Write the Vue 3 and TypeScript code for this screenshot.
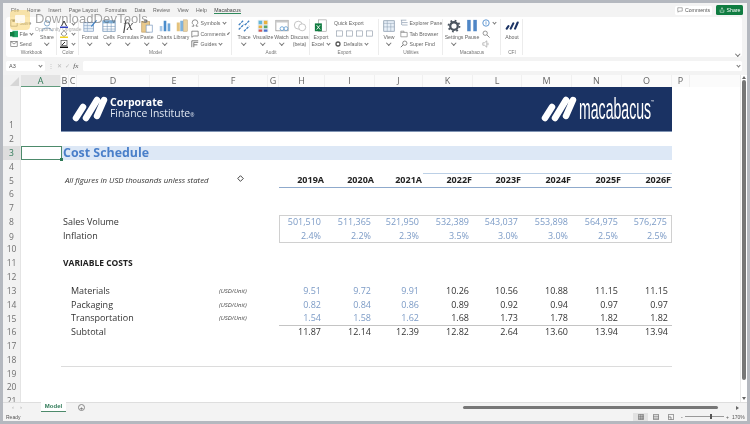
<script setup lang="ts">
const tabs: string[] = ['File', 'Home', 'Insert', 'Page Layout', 'Formulas', 'Data', 'Review', 'View', 'Help']
const cols: string[] = ['A', 'B', 'C', 'D', 'E', 'F', 'G', 'H', 'I', 'J', 'K', 'L', 'M', 'N', 'O', 'P']
const rowNums: number[] = Array.from({ length: 21 }, (_, i) => i + 1)
const years: string[] = ['2019A', '2020A', '2021A', '2022F', '2023F', '2024F', '2025F', '2026F']

interface Line { blue: number; values: string[] }
const lines: Record<number, Line & { label?: string; unit?: string; indent?: boolean }> = {
  8: { label: 'Sales Volume', blue: 8, values: ['501,510', '511,365', '521,950', '532,389', '543,037', '553,898', '564,975', '576,275'] },
  9: { label: 'Inflation', blue: 8, values: ['2.4%', '2.2%', '2.3%', '3.5%', '3.0%', '3.0%', '2.5%', '2.5%'] },
  13: { label: 'Materials', unit: '(USD/Unit)', indent: true, blue: 3, values: ['9.51', '9.72', '9.91', '10.26', '10.56', '10.88', '11.15', '11.15'] },
  14: { label: 'Packaging', unit: '(USD/Unit)', indent: true, blue: 3, values: ['0.82', '0.84', '0.86', '0.89', '0.92', '0.94', '0.97', '0.97'] },
  15: { label: 'Transportation', unit: '(USD/Unit)', indent: true, blue: 3, values: ['1.54', '1.58', '1.62', '1.68', '1.73', '1.78', '1.82', '1.82'] },
  16: { label: 'Subtotal', indent: true, blue: 0, values: ['11.87', '12.14', '12.39', '12.82', '2.64', '13.60', '13.94', '13.94'] },
}
</script>

<template>
  <div class="window">
    <header class="tabs">
      <nav class="tab-list">
        <span v-for="t in tabs" :key="t" class="tab">{{ t }}</span>
        <span class="tab tab-active">Macabacus</span>
      </nav>
      <div class="tab-actions">
        <span class="btn-comments">
          <svg viewBox="0 0 8 8" class="i6"><path d="M1 1h6v4.500H3L1.500 7V5.500H1z" fill="none" stroke="#666" stroke-width=".7" /></svg>
          Comments
        </span>
        <span class="btn-share">
          <svg viewBox="0 0 8 8" class="i6"><path d="M1.500 3.500v3.500h5V3.500M4 5V1M2.600 2.300 4 1l1.400 1.300" fill="none" stroke="#fff" stroke-width=".7" /></svg>
          Share
        </span>
      </div>
    </header>

    <section class="ribbon">
      <div class="group g-workbook">
        <div class="group-body">
          <div class="small-col c-workbook">
            <div class="small"><svg viewBox="0 0 10 10" class="i8"><path d="M1 1h6l2 2v6H1z" fill="#fff" stroke="#555" stroke-width=".8" /><rect x="3" y="1" width="3" height="2.500" fill="#555" /></svg>Save</div>
            <div class="small"><svg viewBox="0 0 10 10" class="i8"><rect x="3" y="1" width="7" height="8" fill="#21a366" /><rect x="0" y="2.500" width="5.500" height="5.500" fill="#107c41" /></svg>File <i class="chev-inline"></i></div>
            <div class="small"><svg viewBox="0 0 10 10" class="i8"><rect x="1" y="2" width="8" height="6" fill="none" stroke="#666" stroke-width=".8" /><path d="M1 2l4 3 4-3" fill="none" stroke="#666" stroke-width=".8" /></svg>Send</div>
          </div>
          <div class="big w-share">
            <svg viewBox="0 0 16 16" class="i16"><circle cx="8" cy="5" r="3" fill="none" stroke="#7aa3c9" /><path d="M2 14c1-5 11-5 12 0" fill="none" stroke="#7aa3c9" /></svg>
            <span>Share</span><i class="chev"></i>
          </div>
        </div>
        <div class="group-name">Workbook</div>
      </div>

      <div class="group g-color">
        <div class="group-body color-body">
          <div class="color-row"><svg viewBox="0 0 8 8" class="i8"><path d="M1.500 6 4 1l2.500 5" fill="none" stroke="#333" /><rect y="6.500" width="8" height="1.500" fill="#2e3fc4" /></svg><i class="chev-inline"></i></div>
          <div class="color-row"><svg viewBox="0 0 8 8" class="i8"><path d="M4 .5 7 4 4 6.500 1 4z" fill="#fff" stroke="#666" stroke-width=".7" /><rect y="6.500" width="8" height="1.500" fill="#f2d21f" /></svg><i class="chev-inline"></i></div>
          <div class="color-row"><svg viewBox="0 0 8 8" class="i8"><rect x="1" y=".5" width="6" height="5" fill="#fff" stroke="#555" stroke-width=".7" /><path d="m2 5 3-3" stroke="#333" /><rect y="6.500" width="8" height="1.500" fill="#111" /></svg><i class="chev-inline"></i></div>
        </div>
        <div class="group-name">Color</div>
      </div>

      <div class="group g-model">
        <div class="group-body pad-1">
          <div class="big w-20">
            <svg viewBox="0 0 16 16" class="i16"><rect x="1" y="4" width="11" height="10" fill="#e8f0f8" stroke="#7d9bc0" stroke-width=".8" /><path d="M1 7.500h11M1 11h11M5 4v10" stroke="#7d9bc0" stroke-width=".6" /><path d="m9 8 6-7 1 1-6 7z" fill="#3f83c8" /></svg>
            <span>Format</span><i class="chev"></i>
          </div>
          <div class="big w-18">
            <svg viewBox="0 0 16 16" class="i16"><rect x="1" y="2" width="14" height="12" fill="#fff" stroke="#6b8fb5" stroke-width=".9" /><rect x="1" y="2" width="14" height="3" fill="#7fb2dc" /><path d="M1 8.500h14M1 11.500h14M6 2v12M10.500 2v12" stroke="#6b8fb5" stroke-width=".6" /></svg>
            <span>Cells</span><i class="chev"></i>
          </div>
          <div class="big w-20">
            <span class="fx">fx</span>
            <span>Formulas</span><i class="chev"></i>
          </div>
          <div class="big w-18">
            <svg viewBox="0 0 16 16" class="i16"><rect x="2" y="3" width="9" height="12" fill="#e9c98b" stroke="#b69257" stroke-width=".7" /><rect x="4.500" y="1" width="4" height="3" fill="#999" /><rect x="7" y="7" width="7" height="8" fill="#fff" stroke="#7d9bc0" stroke-width=".8" /></svg>
            <span>Paste</span><i class="chev"></i>
          </div>
          <div class="big w-17">
            <svg viewBox="0 0 16 16" class="i16"><rect x="2" y="8" width="3" height="6" fill="#a8c8e8" /><rect x="6.500" y="2" width="3" height="12" fill="#4a8ccb" /><rect x="11" y="5" width="3" height="9" fill="#6ea6d8" /></svg>
            <span>Charts</span><i class="chev"></i>
          </div>
          <div class="big w-17">
            <svg viewBox="0 0 16 16" class="i16"><rect x="2" y="4" width="3.500" height="10" fill="#e4c27c" /><rect x="6" y="2" width="3.500" height="12" fill="#7fb2dc" /><rect x="10" y="1" width="4" height="13" fill="#e9d2a0" stroke="#b69257" stroke-width=".5" /></svg>
            <span>Library</span>
          </div>
          <div class="small-col c-symbols">
            <div class="small"><svg viewBox="0 0 10 10" class="i8"><path d="M1 9h2.500V7.500C2 6.500 1.500 5.500 1.500 4.500a3.500 3.500 0 0 1 7 0c0 1-.5 2-2 3V9H9" fill="none" stroke="#555" stroke-width=".8" /></svg>Symbols <i class="chev-inline"></i></div>
            <div class="small"><svg viewBox="0 0 10 10" class="i8"><path d="M1 1.500h8v6H3.500L1 9z" fill="none" stroke="#555" stroke-width=".8" /></svg>Comments <i class="chev-inline"></i></div>
            <div class="small"><svg viewBox="0 0 10 10" class="i8"><path d="M1 1h8M1 1v8M3.500 3v6M3.500 3H9M3.500 6H8" fill="none" stroke="#555" stroke-width=".9" /></svg>Guides <i class="chev-inline"></i></div>
          </div>
        </div>
        <div class="group-name">Model</div>
      </div>

      <div class="group g-audit">
        <div class="group-body pad-2">
          <div class="big w-20">
            <svg viewBox="0 0 16 16" class="i16"><path d="m2 7 5-5M2 12l6-6M8 14l6-6M9 7l5-5" stroke="#3f7fbf" stroke-width="1.500" stroke-dasharray="3 1" /></svg>
            <span>Trace</span><i class="chev"></i>
          </div>
          <div class="big w-18">
            <svg viewBox="0 0 16 16" class="i16"><rect x="2" y="1" width="12" height="14" fill="#dfeaf3" /><rect x="3" y="2" width="4" height="4" fill="#63b7d6" /><rect x="9" y="2" width="4" height="4" fill="#e9b23f" /><rect x="3" y="7.500" width="4" height="3" fill="#e9b23f" /><rect x="9" y="7.500" width="4" height="3" fill="#5aa469" /><rect x="3" y="12" width="4" height="2.500" fill="#d9564f" /><rect x="9" y="12" width="4" height="2.500" fill="#4a6ecb" /></svg>
            <span>Visualize</span><i class="chev"></i>
          </div>
          <div class="big w-19">
            <svg viewBox="0 0 16 16" class="i16"><rect x="1" y="1.500" width="14" height="12" fill="#fff" stroke="#888" stroke-width=".8" /><rect x="1" y="1.500" width="14" height="2.500" fill="#c9c9c9" /><circle cx="8" cy="11" r="2.200" fill="none" stroke="#6aa2d3" /><circle cx="12.500" cy="11" r="2.200" fill="none" stroke="#6aa2d3" /></svg>
            <span>Watch</span><i class="chev"></i>
          </div>
          <div class="big w-17">
            <svg viewBox="0 0 16 16" class="i16"><circle cx="6" cy="7" r="4.500" fill="#fff" stroke="#bbb" /><circle cx="10.500" cy="9.500" r="4" fill="#fff" stroke="#bbb" /></svg>
            <span>Discuss</span><span class="beta">(beta)</span>
          </div>
        </div>
        <div class="group-name">Audit</div>
      </div>

      <div class="group g-export">
        <div class="group-body">
          <div class="big w-22">
            <svg viewBox="0 0 16 16" class="i16"><rect x="5" y="1" width="9" height="13" fill="#fff" stroke="#999" stroke-width=".7" /><rect x="1" y="5" width="8" height="9" fill="#107c41" /><path d="m3 7 4 5M7 7l-4 5" stroke="#fff" /></svg>
            <span>Export</span><span class="beta">Excel <i class="chev-inline"></i></span>
          </div>
          <div class="small-col c-quick">
            <div class="small">Quick Export</div>
            <div class="small q-icons">
              <svg v-for="n in 4" :key="n" viewBox="0 0 8 8" class="i7"><rect x=".5" y="1" width="7" height="6" fill="none" stroke="#8a96a5" stroke-width=".7" /></svg>
            </div>
            <div class="small"><svg viewBox="0 0 10 10" class="i8"><circle cx="5" cy="5" r="2.500" fill="none" stroke="#555" stroke-width="1.600" /></svg>Defaults <i class="chev-inline"></i></div>
          </div>
        </div>
        <div class="group-name">Export</div>
      </div>

      <div class="group g-utilities">
        <div class="group-body">
          <div class="big w-20">
            <svg viewBox="0 0 16 16" class="i16"><rect x="2" y="2" width="12" height="12" fill="#e8f0f8" stroke="#7d90a5" stroke-width=".8" /><path d="M2 5h12M6 2v12M10 5v9M2 9h12" stroke="#7d90a5" stroke-width=".5" /></svg>
            <span>View</span><i class="chev"></i>
          </div>
          <div class="small-col c-utils">
            <div class="small"><svg viewBox="0 0 10 10" class="i8"><path d="M1 1.500h7M2.500 4.500h7M2.500 7.500h7M2 1.500v6" fill="none" stroke="#7d90a5" stroke-width=".8" /></svg>Explorer Pane</div>
            <div class="small"><svg viewBox="0 0 10 10" class="i8"><path d="M1 3h8v5.500H1zM1 3V1.500h4V3" fill="none" stroke="#777" stroke-width=".8" /></svg>Tab Browser</div>
            <div class="small"><svg viewBox="0 0 10 10" class="i8"><circle cx="6" cy="4" r="2.700" fill="none" stroke="#555" stroke-width=".8" /><path d="m4 6-3 3" stroke="#555" /></svg>Super Find</div>
          </div>
        </div>
        <div class="group-name">Utilities</div>
      </div>

      <div class="group g-macabacus">
        <div class="group-body">
          <div class="big w-22">
            <svg viewBox="0 0 16 16" class="i16"><circle cx="8" cy="8" r="4.300" fill="none" stroke="#4b5560" stroke-width="2.600" /><circle cx="8" cy="8" r="6.300" fill="none" stroke="#4b5560" stroke-width="2" stroke-dasharray="2 2.950" /></svg>
            <span>Settings</span><i class="chev"></i>
          </div>
          <div class="big w-14">
            <svg viewBox="0 0 16 16" class="i16"><rect x="2.500" y="1" width="4" height="13" fill="#4f86c6" /><rect x="9.500" y="1" width="4" height="13" fill="#4f86c6" /></svg>
            <span>Pause</span>
          </div>
          <div class="small-col c-mac">
            <div class="small"><svg viewBox="0 0 10 10" class="i8"><circle cx="5" cy="5" r="4" fill="none" stroke="#5a93d0" stroke-width="1.200" /><path d="M5 3v4" stroke="#5a93d0" /></svg><i class="chev-inline"></i></div>
            <div class="small"><svg viewBox="0 0 10 10" class="i8"><circle cx="4" cy="4" r="2.700" fill="none" stroke="#888" stroke-width="1.100" /><path d="m6 6 3.500 3.500" stroke="#888" stroke-width="1.200" /></svg></div>
            <div class="small"><svg viewBox="0 0 10 10" class="i8"><path d="M1 3.500h2L6 1v8L3 6.500H1z" fill="none" stroke="#999" stroke-width=".8" /><path d="M7.500 3.500v3" stroke="#999" stroke-width=".8" /></svg></div>
          </div>
        </div>
        <div class="group-name">Macabacus</div>
      </div>

      <div class="group g-cfi">
        <div class="group-body">
          <div class="big w-22">
            <svg viewBox="0 0 16 16" class="i16"><path d="m2 11 2-3M6.500 11l3-6M11.500 11l3-7" stroke="#1a3263" stroke-width="2.400" stroke-linecap="round" /></svg>
            <span>About</span>
          </div>
        </div>
        <div class="group-name">CFI</div>
      </div>
      <i class="chev ribbon-chev"></i>
    </section>

    <section class="formula">
      <div class="namebox"><span>A3</span><i class="chev-inline"></i></div>
      <div class="formula-btns">
        <span class="dim">⋮</span><span class="dim">✕</span><span class="dim">✓</span><span class="fx-small">fx</span>
      </div>
      <div class="formula-input"><i class="chev-inline"></i></div>
    </section>

    <section class="sheet">
      <div class="grid-area">
        <div class="row head-row">
          <div class="corner"><svg viewBox="0 0 18 12" class="corner-svg"><path d="M16 2v9H7z" fill="#d6d6d6" /></svg></div>
          <div v-for="c in cols" :key="c" class="col-head" :class="{ 'col-sel': c === 'A' }">{{ c }}</div>
          <div class="col-rest"></div>
        </div>
        <div class="rows">
          <div v-for="n in rowNums" :key="n" class="row" :class="{ 'row-tall': n === 1 }">
            <div class="row-head" :class="{ 'row-sel': n === 3 }">{{ n }}</div>

            <template v-if="n === 1">
              <div class="banner">
                <div class="brand">
                  <svg viewBox="0 0 36 26" class="brand-mark"><path d="M4 22 11 11M14 22 25 4M25 20 32 4" stroke="#fff" stroke-width="6.500" stroke-linecap="round" /></svg>
                  <div class="brand-text"><b>Corporate</b><span>Finance Institute<small>®</small></span></div>
                </div>
                <div class="brand">
                  <svg viewBox="0 0 36 26" class="brand-mark"><path d="M4 22 11 11M14 22 25 4M25 20 32 4" stroke="#fff" stroke-width="6.500" stroke-linecap="round" /></svg>
                  <span class="mac-word">macabacus</span><span class="tm">™</span>
                </div>
              </div>
            </template>

            <template v-else-if="n === 3">
              <div class="selected"><i class="handle"></i></div>
              <div class="band">Cost Schedule</div>
            </template>

            <template v-else-if="n === 5">
              <div class="note">All figures in USD thousands unless stated<svg viewBox="0 0 10 10" class="cursor"><path d="M5 1 9 5 5 9 1 5z" fill="#fff" stroke="#333" stroke-width="1.300" /></svg></div>
              <div v-for="(y, i) in years" :key="y" class="year" :class="{ 'year-top': i > 2 }">{{ y }}</div>
            </template>

            <template v-else-if="n === 11">
              <div class="section">VARIABLE COSTS</div>
            </template>

            <template v-else-if="n === 18">
              <div class="rule"></div>
            </template>

            <template v-else-if="lines[n]">
              <div class="label" :class="{ indent: lines[n].indent }">{{ lines[n].label }}</div>
              <div v-if="lines[n].unit" class="unit">{{ lines[n].unit }}</div>
              <div
                v-for="(v, i) in lines[n].values"
                :key="i"
                class="num"
                :class="{
                  blue: i < lines[n].blue,
                  'box-top': n === 8,
                  'box-bottom': n === 9,
                  'box-left': (n === 8 || n === 9) && i === 0,
                  'box-right': (n === 8 || n === 9) && i === 7,
                  'sub-top': n === 16,
                }"
              >{{ v }}</div>
            </template>
          </div>
        </div>
      </div>
      <aside class="vscroll">
        <i class="arrow-up"></i>
        <div class="vthumb"></div>
        <i class="arrow-down"></i>
      </aside>
    </section>

    <section class="tabbar">
      <div class="nav-arrows"><span>‹</span><span>›</span></div>
      <div class="sheet-tab">Model</div>
      <div class="add-sheet">+</div>
      <div class="hscroll"><div class="hthumb"></div><i class="arrow-right"></i></div>
    </section>

    <footer class="status">
      <span>Ready</span>
      <div class="status-right">
        <span class="view view-on"><svg viewBox="0 0 8 8" class="i6b"><path d="M.5.5h7v7h-7zM.5 3h7M.5 5.500h7M3 .5v7M5.500.5v7" fill="none" stroke="#555" stroke-width=".7" /></svg></span>
        <span class="view"><svg viewBox="0 0 8 8" class="i6b"><path d="M.5.5h7v7h-7zM.5 3h7M.5 5.500h7" fill="none" stroke="#555" stroke-width=".8" /></svg></span>
        <span class="view"><svg viewBox="0 0 8 8" class="i6b"><path d="M.5.5h7v7h-7zM.5 4h3.500v3.500" fill="none" stroke="#555" stroke-width=".8" /></svg></span>
        <div class="zoom"><span>-</span><div class="slider"><i></i></div><span>+</span></div>
        <span class="pct">170%</span>
      </div>
    </footer>

    <div class="watermark">
      <div class="wm-logo"><i></i></div>
      <div class="wm-text">
        <div class="wm-title">DownloadDevTools</div>
        <div class="wm-sub">Opportunity Upgrade</div>
      </div>
    </div>
  </div>
</template>

<style scoped>
.window {
  position: relative;
  width: 750px;
  height: 424px;
  box-sizing: border-box;
  border: 3px solid #b4b8bf;
  background: #f3f3f3;
  font-family: "Open Sans", sans-serif;
  color: #333;
  overflow: hidden;
  display: flex;
  flex-direction: column;
  filter: blur(0.35px);
}
.tabs {
  height: 14px;
  display: flex;
  align-items: center;
  justify-content: space-between;
  flex: none;
}
.tab-list {
  display: flex;
  gap: 7.500px;
  padding-left: 8px;
  font-family: "Liberation Sans", sans-serif;
  font-size: 5.200px;
  color: #666;
}
.tab-active {
  border-bottom: 1px solid #2f8a5c;
  color: #444;
}
.tab-actions {
  display: flex;
  gap: 4px;
  padding-right: 4px;
  align-items: center;
  font-family: "Liberation Sans", sans-serif;
  font-size: 5.200px;
}
.btn-comments, .btn-share {
  display: flex;
  align-items: center;
  justify-content: center;
  gap: 2px;
  height: 9px;
  border-radius: 1.500px;
  box-sizing: border-box;
}
.btn-comments { background: #fff; color: #555; width: 37px; }
.btn-share { background: #107c41; color: #fff; height: 10px; width: 27px; }
.i6 { width: 6px; height: 6px; }
.i7 { width: 7px; height: 7px; }
.i8 { width: 8px; height: 8px; flex: none; }
.i16 { width: 14px; height: 14px; flex: none; }
.i6b { width: 6px; height: 6px; }

.ribbon {
  position: relative;
  height: 40px;
  margin: 0 5px 0 3px;
  background: #fff;
  border-radius: 3px;
  display: flex;
  flex: none;
  font-family: "Liberation Sans", sans-serif;
  font-size: 5.200px;
  color: #666;
}
.group {
  display: flex;
  flex-direction: column;
  flex: none;
  position: relative;
}
.group::after {
  content: "";
  position: absolute;
  right: 0;
  top: 2px;
  bottom: 2px;
  width: 1px;
  background: #ececec;
}
.g-workbook { width: 51px; }
.g-color { width: 22px; }
.g-model { width: 153px; }
.g-audit { width: 78px; }
.g-export { width: 69px; }
.g-utilities { width: 64px; }
.g-macabacus { width: 58px; }
.g-cfi { width: 22px; }
.group-body {
  height: 33px;
  display: flex;
  padding-top: 2px;
  box-sizing: border-box;
}
.group-name {
  text-align: center;
  line-height: 6px;
  color: #777;
  font-size: 4.800px;
}
.pad-1 { padding-left: 1px; }
.pad-2 { padding-left: 2px; }
.big {
  display: flex;
  flex-direction: column;
  align-items: center;
  flex: none;
  line-height: 6px;
  white-space: nowrap;
}
.big > span:not(.fx) { margin-top: 1px; }
.big > .beta { margin-top: 0; }
.chev {
  display: block;
  width: 2.500px;
  height: 2.500px;
  margin-top: 1px;
  border-right: .7px solid #777;
  border-bottom: .7px solid #777;
  transform: rotate(45deg);
}
.chev-inline {
  display: inline-block;
  width: 2px;
  height: 2px;
  margin: 0 1px 1px 1px;
  border-right: .6px solid #777;
  border-bottom: .6px solid #777;
  transform: rotate(45deg);
}
.w-14 { width: 14px; }
.w-17 { width: 17px; }
.w-18 { width: 18px; }
.w-19 { width: 19px; }
.w-20 { width: 20px; }
.w-22 { width: 22px; }
.w-share { width: 20px; margin-left: 1px; }
.fx {
  font-family: "Liberation Serif", serif;
  font-style: italic;
  font-size: 14px;
  line-height: 14px;
  height: 14px;
  color: #444;
}
.small-col {
  display: flex;
  flex-direction: column;
  justify-content: space-between;
  height: 29px;
  flex: none;
}
.small {
  display: flex;
  align-items: center;
  gap: 1.500px;
  height: 8px;
  white-space: nowrap;
}
.c-workbook { width: 30px; padding-left: 4px; box-sizing: border-box; }
.c-symbols { margin-left: 1px; width: 36px; }
.c-quick { margin-left: 2px; width: 42px; }
.c-utils { margin-left: 1px; }
.c-mac { margin-left: 3px; }
.q-icons { gap: 3px; padding-left: 2px; }
.color-body {
  flex-direction: column;
  justify-content: space-between;
  align-items: flex-start;
  padding: 3px 0 2px 3px;
}
.color-row { display: flex; align-items: center; gap: 3px; height: 8px; }
.ribbon-chev { position: absolute; right: 3px; bottom: 2px; margin: 0; }

.formula {
  height: 10px;
  margin: 4px 5px 4px 3px;
  flex: none;
  display: flex;
  font-family: "Liberation Sans", sans-serif;
  font-size: 5.500px;
  color: #555;
  line-height: 10px;
}
.namebox {
  width: 39px;
  background: #fff;
  border-radius: 1.500px;
  display: flex;
  justify-content: space-between;
  align-items: center;
  padding: 0 2px 0 3px;
  box-sizing: border-box;
}
.formula-btns {
  width: 38px;
  display: flex;
  justify-content: space-around;
  padding: 0 3px 0 1px;
  box-sizing: border-box;
}
.dim { color: #bbb; }
.fx-small { font-family: "Liberation Serif", serif; font-style: italic; font-size: 7px; color: #555; }
.formula-input {
  flex: 1;
  background: #fff;
  border-radius: 1.500px;
  display: flex;
  justify-content: flex-end;
  align-items: center;
  padding-right: 1px;
}

.sheet {
  height: 327px;
  display: flex;
  flex: none;
  background: #fff;
}
.grid-area {
  width: 737px;
  flex: none;
  display: flex;
  flex-direction: column;
  overflow: hidden;
}
.rows { height: 315px; overflow: hidden; }
.row {
  display: grid;
  grid-template-columns: 18px 40px 8px 8px 73px 49px 69px 11px 46px 50px 48px 50px 49px 50px 50px 50px 18px;
  height: 13.800px;
  position: relative;
}
.row-tall { height: 45px; }
.head-row {
  height: 12px;
  background: #fbfbfb;
  color: #666;
  font-size: 9px;
  line-height: 12px;
}
.corner { background: #f1f1f1; }
.corner-svg { display: block; width: 18px; height: 12px; }
.col-head {
  text-align: center;
  border-right: 1px solid #f0f0f0;
}
.col-sel {
  background: #e4e4e4;
  border-bottom: 1px solid #5f9a7c;
  color: #2f7a57;
  height: 12px;
  box-sizing: border-box;
}
.row-head {
  grid-column: 1;
  display: flex;
  align-items: flex-end;
  justify-content: center;
  background: #f2f2f2;
  border-right: 1px solid #e4e4e4;
  font-size: 8.500px;
  line-height: 13.800px;
  color: #6f6f6f;
  box-sizing: border-box;
  height: 100%;
}
.row-sel { background: #dedede; color: #2f7a57; }
.banner {
  grid-column: 3 / 17;
  background: #1a3263;
  border-bottom: 1px solid #7f93b3;
  box-sizing: border-box;
  display: flex;
  justify-content: space-between;
  align-items: center;
  padding: 0 18px 0 11px;
  color: #fff;
}
.brand { display: flex; align-items: center; }
.brand-mark { width: 36px; height: 26px; flex: none; }
.brand-text {
  display: flex;
  flex-direction: column;
  line-height: 11px;
  margin-left: 2px;
}
.brand-text b { font-weight: 700; font-size: 10.500px; }
.brand-text span { font-size: 10.400px; color: #dfe6f0; }
.brand-text small { font-size: 5px; }
.mac-word {
  display: block;
  font-family: "Liberation Sans", sans-serif;
  font-size: 30px;
  line-height: 26px;
  width: 72px;
  transform: scaleX(.47);
  transform-origin: left center;
  margin-left: 2px;
  white-space: nowrap;
}
.tm { font-size: 4px; line-height: 4px; margin-top: -14px; width: 3px; }
.selected {
  grid-column: 2;
  border: 1px solid #4d8a6b;
  margin-right: -1px;
  position: relative;
  box-sizing: border-box;
  height: 100%;
  z-index: 1;
}
.handle {
  position: absolute;
  right: -2px;
  bottom: -2px;
  width: 3px;
  height: 3px;
  background: #2f7a57;
}
.band {
  grid-column: 3 / 17;
  background: #dde8f6;
  color: #4a7fc9;
  font-weight: 700;
  font-size: 12.400px;
  line-height: 13.800px;
  padding-left: 2px;
}
.note {
  grid-column: 3 / 9;
  font-style: italic;
  font-size: 7.800px;
  line-height: 14px;
  padding-left: 4px;
  position: relative;
  color: #333;
}
.cursor {
  position: absolute;
  left: 176px;
  top: 2px;
  width: 7px;
  height: 7px;
}
.year {
  text-align: right;
  padding-right: 1px;
  font-size: 9px;
  font-weight: 700;
  line-height: 13.800px;
  color: #222;
  border-bottom: 1px solid #8faacc;
  height: 14.800px;
  box-sizing: border-box;
}
.year-top { border-top: 1px solid #bcd0e6; line-height: 12.800px; }
.label {
  grid-column: 3 / 6;
  font-size: 9px;
  line-height: 13.800px;
  padding-left: 2px;
  white-space: nowrap;
  color: #333;
}
.label.indent { padding-left: 10px; }
.unit {
  grid-column: 6 / 8;
  font-size: 6px;
  font-style: italic;
  line-height: 14px;
  padding-left: 69px;
  white-space: nowrap;
  color: #444;
}
.num {
  font-size: 9px;
  line-height: 13.800px;
  text-align: right;
  padding-right: 4px;
  box-sizing: border-box;
  color: #333;
}
.row > .num:nth-last-child(8) { grid-column: 9; }
.row > .year:nth-last-child(8) { grid-column: 9; }
.blue { color: #7c9bc6; }
.box-top { border-top: 1px solid #d0d0d0; line-height: 12.800px; }
.box-bottom { border-bottom: 1px solid #d0d0d0; }
.box-left { border-left: 1px solid #d0d0d0; }
.box-right { border-right: 1px solid #d0d0d0; }
.sub-top { border-top: 1px solid #c4c4c4; line-height: 12.800px; }
.section {
  grid-column: 3 / 8;
  font-weight: 700;
  font-size: 8.500px;
  line-height: 13.800px;
  padding-left: 2px;
  color: #222;
}
.rule {
  grid-column: 3 / 17;
  border-bottom: 1px solid #dcdcdc;
}
.vscroll {
  width: 7px;
  position: relative;
  background: #fff;
  border-left: 1px solid #e8e8e8;
  box-sizing: border-box;
  display: flex;
  flex-direction: column;
  align-items: center;
  padding-top: 1px;
}
.arrow-up {
  width: 0;
  height: 0;
  border: 2px solid transparent;
  border-top: 0;
  border-bottom: 3px solid #666;
}
.vthumb {
  width: 3.500px;
  height: 300px;
  margin-top: 1px;
  border-radius: 2px;
  background: #777;
}
.arrow-down {
  width: 0;
  height: 0;
  margin-top: 17px;
  border: 2px solid transparent;
  border-bottom: 0;
  border-top: 3px solid #666;
}
.tabbar {
  height: 10px;
  flex: none;
  display: flex;
  align-items: center;
  border-top: 1px solid #dedede;
  box-sizing: border-box;
  position: relative;
  font-family: "Liberation Sans", sans-serif;
  font-size: 6px;
  line-height: 9px;
}
.nav-arrows {
  width: 38px;
  display: flex;
  gap: 6px;
  padding-left: 9px;
  box-sizing: border-box;
  color: #aaa;
}
.sheet-tab {
  width: 25px;
  height: 10px;
  background: #fff;
  text-align: center;
  color: #2f7a57;
  font-weight: 700;
  line-height: 9px;
  border-bottom: 1px solid #4d8a6b;
  box-sizing: border-box;
  margin-top: -1px;
}
.add-sheet {
  width: 7px;
  height: 7px;
  margin-left: 12px;
  border: .7px solid #888;
  border-radius: 50%;
  text-align: center;
  line-height: 6px;
  color: #555;
  box-sizing: border-box;
}
.hscroll {
  flex: 1;
  display: flex;
  align-items: center;
  justify-content: flex-end;
  padding-right: 8px;
}
.hthumb {
  width: 255px;
  height: 3.500px;
  border-radius: 2px;
  background: #777;
  margin-right: 18px;
}
.arrow-right {
  width: 0;
  height: 0;
  border: 2px solid transparent;
  border-right: 0;
  border-left: 3px solid #666;
}
.status {
  height: 9px;
  flex: none;
  display: flex;
  justify-content: space-between;
  align-items: center;
  padding: 0 4px 0 3px;
  font-family: "Liberation Sans", sans-serif;
  font-size: 5px;
  line-height: 8px;
  color: #555;
}
.status-right { display: flex; align-items: center; }
.view {
  width: 15px;
  height: 8px;
  display: flex;
  align-items: center;
  justify-content: center;
}
.view-on { background: #e2e2e2; }
.zoom { display: flex; align-items: center; gap: 2px; margin: 0 3px 0 3px; width: 48px; }
.slider {
  flex: 1;
  height: 1px;
  background: #999;
  position: relative;
}
.slider i {
  position: absolute;
  left: 25px;
  top: -2px;
  width: 2px;
  height: 5px;
  background: #555;
}
.pct { width: 11px; }

.watermark {
  position: absolute;
  left: 7px;
  top: 7px;
  display: flex;
  gap: 5px;
  pointer-events: none;
}
.wm-logo {
  width: 20px;
  height: 20px;
  border-radius: 4px;
  background: rgba(250, 215, 120, .6);
  position: relative;
}
.wm-logo i {
  position: absolute;
  left: 5px;
  top: 5px;
  width: 10px;
  height: 8px;
  background: rgba(255, 255, 255, .8);
  border-radius: 1px;
}
.wm-title {
  font-family: "Liberation Sans", sans-serif;
  font-size: 13px;
  letter-spacing: .1px;
  line-height: 14px;
  color: rgba(90, 90, 90, .55);
  white-space: nowrap;
  margin-top: 2px;
}
.wm-sub {
  font-family: "Liberation Sans", sans-serif;
  font-size: 5px;
  line-height: 7px;
  color: rgba(90, 90, 90, .5);
  white-space: nowrap;
}
</style>
